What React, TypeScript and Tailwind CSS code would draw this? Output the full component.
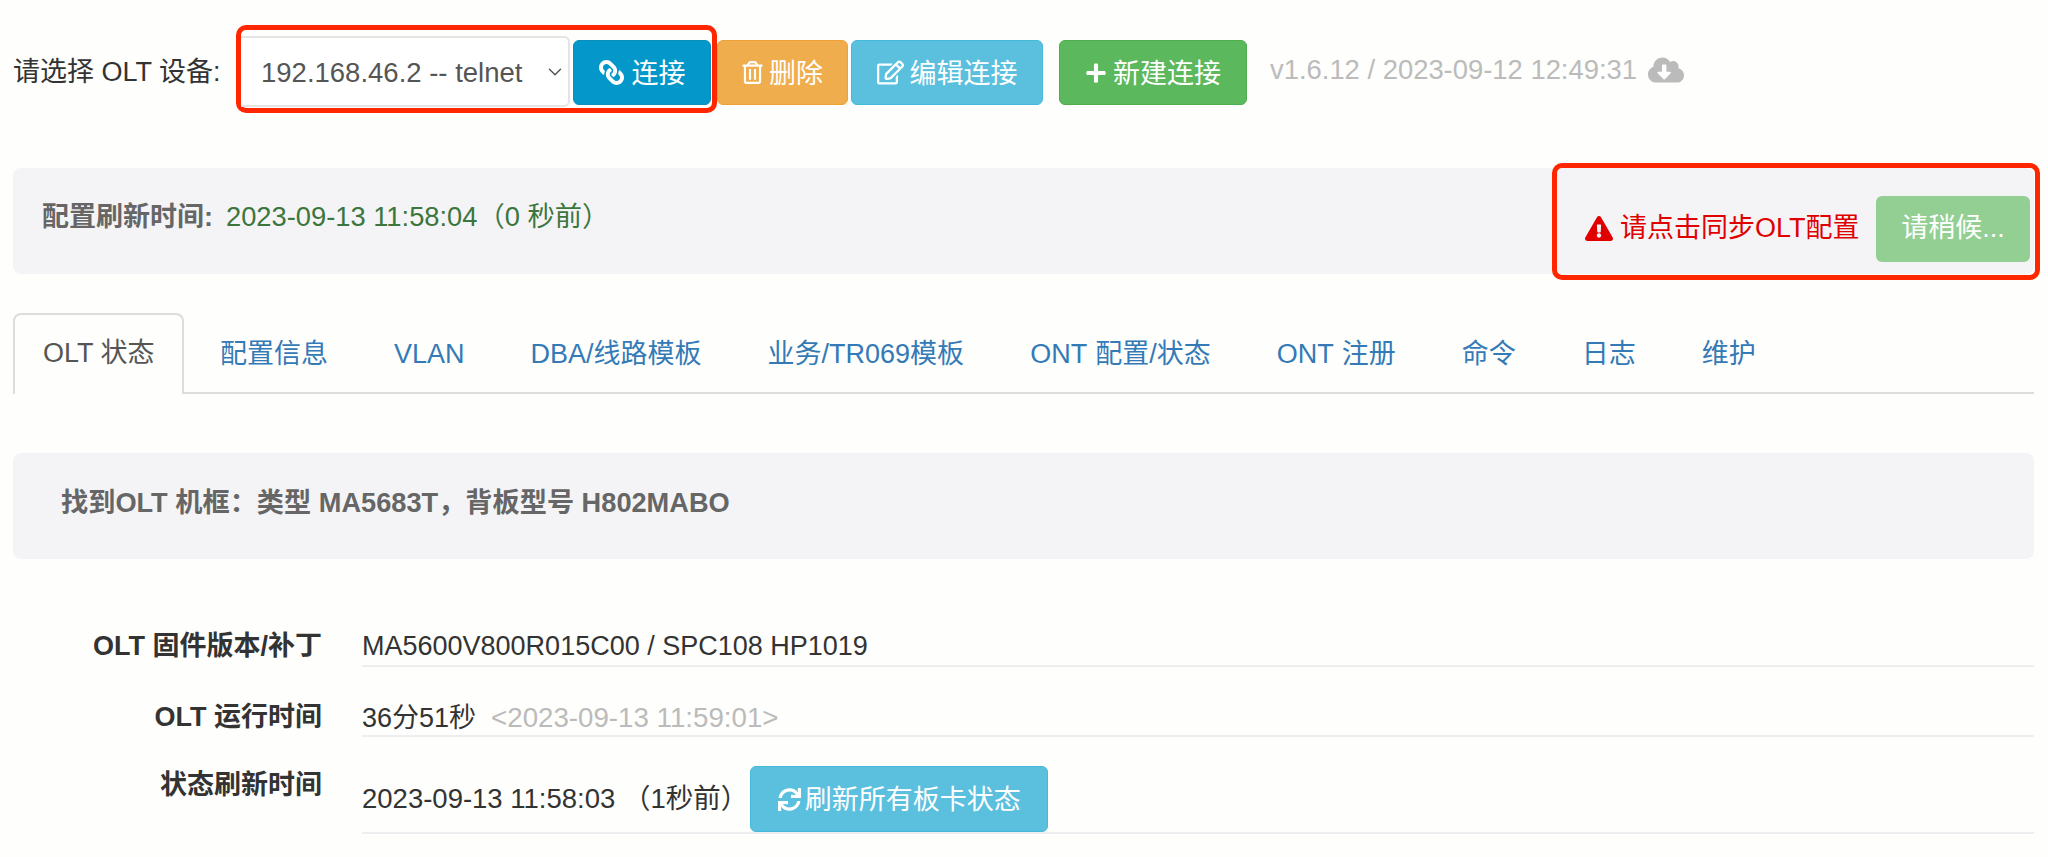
import React from "react";
import { ChevronDown } from "lucide-react";
import {
  FaCloudDownloadAlt,
  FaExclamationTriangle,
  FaLink,
  FaPlus,
  FaRegEdit,
  FaRegTrashAlt,
  FaSync,
} from "react-icons/fa";

const tabs = [
  "配置信息",
  "VLAN",
  "DBA/线路模板",
  "业务/TR069模板",
  "ONT 配置/状态",
  "ONT 注册",
  "命令",
  "日志",
  "维护",
];

function InfoRow({
  label,
  className,
  children,
}: {
  label: string;
  className: string;
  children: React.ReactNode;
}) {
  return (
    <div className={`flex items-start ${className}`}>
      <div className="w-[309px] text-right font-bold leading-[38px] text-[#333]">
        {label}
      </div>
      <div className="ml-[40px] flex flex-1 items-center border-b-2 border-[#eeeef0] text-[#333]">
        {children}
      </div>
    </div>
  );
}

function App() {
  return (
    <div className="h-[857px] overflow-hidden bg-[#fefefc] pl-[13px] pr-[14px] pt-[25px] font-['Liberation_Sans','Noto_Sans_CJK_SC',sans-serif] text-[27px] text-[#333]">
      <div className="flex items-start">
        <label className="mt-[28px] w-[223px] whitespace-nowrap leading-[38px]">
          请选择 OLT 设备:
        </label>
        <div className="flex h-[88px] w-[481px] items-start rounded-[10px] border-[5px] border-[#ff2600]">
          <div className="relative mt-[6px]">
            <select className="h-[71px] w-[329px] appearance-none rounded-r-[6px] border-2 border-l-0 border-[#e4e4e4] bg-white pl-[20px] pt-[2px] text-[27.5px] text-[#555] outline-none">
              <option>192.168.46.2 -- telnet</option>
            </select>
            <ChevronDown
              className="absolute right-[4px] top-[25px] h-[22px] w-[22px] text-[#555]"
              strokeWidth={1.6}
            />
          </div>
          <button className="ml-[3px] mt-[10px] flex h-[65px] w-[138px] items-center justify-center gap-[8px] rounded-[6px] border border-[#0a8fbd] bg-[#0398c9] pt-[3px] text-white">
            <FaLink className="-mt-[3px] h-[25px] w-[25px] -scale-x-100" />
            连接
          </button>
        </div>
        <button className="mt-[15px] flex h-[65px] w-[131px] items-center justify-center gap-[6px] rounded-[6px] border border-[#eea236] bg-[#f0ad4e] pt-[3px] text-white">
          <FaRegTrashAlt className="-mt-[3px] h-[23px] w-[21px]" />
          删除
        </button>
        <button className="ml-[3px] mt-[15px] flex h-[65px] w-[192px] items-center justify-center gap-[6px] rounded-[6px] border border-[#46b8da] bg-[#5bc0de] pt-[3px] text-white">
          <FaRegEdit className="-mt-[3px] h-[27px] w-[27px]" />
          编辑连接
        </button>
        <button className="ml-[16px] mt-[15px] flex h-[65px] w-[188px] items-center justify-center gap-[6px] rounded-[6px] border border-[#4cae4c] bg-[#5cb85c] pt-[3px] text-white">
          <FaPlus className="-mt-[3px] h-[22px] w-[22px]" />
          新建连接
        </button>
        <div className="ml-[23px] mt-[26px] flex items-center gap-[11px] text-[27.4px] leading-[38px] text-[#bbb]">
          v1.6.12 / 2023-09-12 12:49:31
          <FaCloudDownloadAlt className="h-[32px] w-[36px]" />
        </div>
      </div>

      <div className="mt-[55px] flex h-[106px] items-start justify-between rounded-[8px] bg-[#f4f4f6] pl-[29px]">
        <div className="mt-[30px] leading-[38px]">
          <span className="font-bold text-[#666]">配置刷新时间:</span>
          <span className="ml-[13px] text-[27.3px] text-[#3c763d]">2023-09-13 11:58:04（0 秒前）</span>
        </div>
        <div className="-mr-[6px] -mt-[5px] flex h-[117px] w-[488px] items-center rounded-[10px] border-[5px] border-[#ff2600] pl-[28px] pt-[14px]">
          <FaExclamationTriangle className="h-[25px] w-[28px] text-[#e00000]" />
          <span className="ml-[7px] whitespace-nowrap text-[#e00000]">请点击同步OLT配置</span>
          <button className="ml-auto mr-[5px] h-[66px] w-[154px] rounded-[6px] bg-[#93cf93] text-white">
            请稍候...
          </button>
        </div>
      </div>

      <div className="mt-[39px] flex h-[81px] items-start border-b-2 border-[#dddddd]">
        <div className="h-[81px] w-[171px] rounded-t-[8px] border-2 border-b-0 border-[#dddddd] bg-[#fefefc] pl-[28px] pt-[19px] leading-[38px] text-[#555]">
          OLT 状态
        </div>
        <nav className="ml-[5px] flex">
          {tabs.map((tab) => (
            <a
              key={tab}
              className="mr-[4px] block whitespace-nowrap px-[31px] pt-[22px] leading-[38px] text-[#337ab7] [word-spacing:1px]"
            >
              {tab}
            </a>
          ))}
        </nav>
      </div>

      <div className="mt-[59px] flex h-[106px] items-start rounded-[8px] bg-[#f4f4f6] pl-[48px] pt-[31px] text-[27.2px] font-bold leading-[38px] text-[#666]">
        找到OLT 机框：类型 MA5683T，背板型号 H802MABO
      </div>

      <InfoRow label="OLT 固件版本/补丁" className="mt-[68px]">
        <span className="leading-[38px]">MA5600V800R015C00 / SPC108 HP1019</span>
      </InfoRow>
      <InfoRow label="OLT 运行时间" className="mt-[31px]">
        <span className="mt-[3px] leading-[34px]">36分51秒</span>
        <span className="ml-[15px] mt-[3px] text-[27.7px] leading-[34px] text-[#bbb]">&lt;2023-09-13 11:59:01&gt;</span>
      </InfoRow>
      <InfoRow label="状态刷新时间" className="mt-[29px]">
        <span className="text-[27.5px] leading-[38px]">2023-09-13 11:58:03 （1秒前）</span>
        <button className="ml-[2px] flex h-[66px] w-[298px] items-center justify-center gap-[4px] rounded-[6px] border border-[#46b8da] bg-[#5bc0de] pt-[2px] text-white">
          <FaSync className="-mt-[2px] h-[23px] w-[23px]" />
          刷新所有板卡状态
        </button>
      </InfoRow>
    </div>
  );
}

export default App;
